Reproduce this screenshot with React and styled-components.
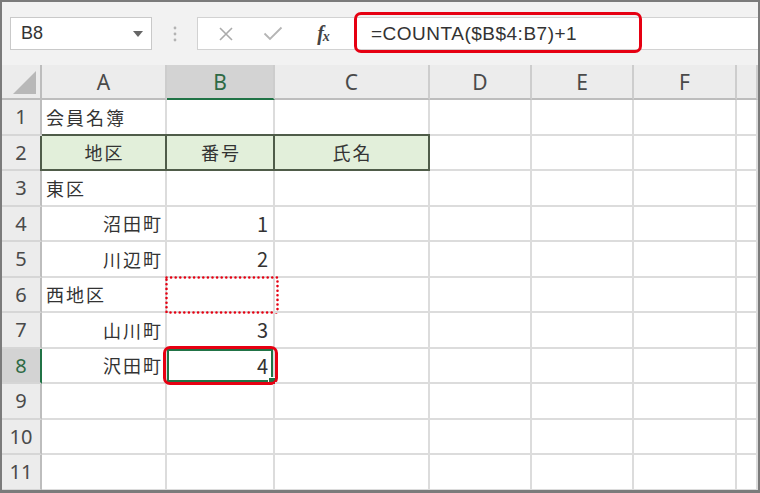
import React from 'react';
import styled, { createGlobalStyle, css } from 'styled-components';

const GlobalStyle = createGlobalStyle`
  html, body {
    margin: 0;
    padding: 0;
    background: #ffffff;
  }
  body {
    font-family: "Noto Sans CJK JP", "Noto Sans", sans-serif;
  }
`;

const green = '#217346';
const red = '#e60012';

const Frame = styled.div`
  width: 760px;
  height: 493px;
  box-sizing: border-box;
  border: 2px solid #7b7b7b;
  border-bottom-width: 3px;
  background: #f2f2f2;
  overflow: hidden;
  display: flex;
  flex-direction: column;
`;

const Toolbar = styled.div`
  height: 63px;
  flex: none;
  box-sizing: border-box;
  padding: 15px 0 0 8px;
  display: flex;
  align-items: flex-start;
`;

const NameBox = styled.div`
  width: 142px;
  height: 33px;
  box-sizing: border-box;
  border: 1px solid #c9c9c9;
  background: #fff;
  display: flex;
  align-items: center;
  justify-content: space-between;
  padding: 0 8px 0 10px;
  font-family: "Liberation Sans", Arial, sans-serif;
  font-size: 18px;
  color: #333;
`;

const Separator = styled.div`
  width: 45px;
  height: 33px;
  display: flex;
  align-items: center;
  justify-content: center;
`;

const FormulaBar = styled.div`
  flex: 1;
  height: 33px;
  box-sizing: border-box;
  border: 1px solid #d2d2d2;
  border-right: none;
  background: #fff;
  display: flex;
  align-items: stretch;
`;

const IconSlot = styled.div`
  width: ${(p) => p.$w}px;
  display: flex;
  align-items: center;
  justify-content: center;
  flex: none;
`;

const Fx = styled.span`
  font-family: "Liberation Serif", "Times New Roman", serif;
  font-style: italic;
  font-weight: bold;
  font-size: 20px;
  color: #444;
  letter-spacing: -1px;

  sub {
    font-size: 14px;
    vertical-align: -1px;
  }
`;

const FormulaInput = styled.div`
  flex: 1;
  position: relative;
  display: flex;
  align-items: center;
  padding-left: 17px;
  font-family: "Liberation Sans", Arial, sans-serif;
  font-size: 19px;
  letter-spacing: 0.5px;
  color: #333;
`;

const Callout = styled.div`
  position: absolute;
  box-sizing: border-box;
  border: 3px solid ${red};
  border-radius: 7px;
  pointer-events: none;
`;

const FormulaCallout = styled(Callout)`
  left: 0;
  top: -6px;
  width: 288px;
  height: 41px;
`;

const Sheet = styled.div`
  flex: 1;
  display: grid;
  grid-template-columns: 40px 125px 108px 155px 102px 102px 103px 1fr;
  grid-template-rows: 35px repeat(11, 35.5px);
  background: #fff;
`;

const HeaderCell = styled.div`
  box-sizing: border-box;
  background: ${(p) => (p.$active ? '#d3d3d3' : '#ececec')};
  color: ${(p) => (p.$active ? '#2e6a45' : '#4a4a4a')};
  font-family: "Noto Sans", "Liberation Sans", sans-serif;
  font-size: 21px;
  display: flex;
  align-items: center;
  justify-content: center;
`;

const ColHeader = styled(HeaderCell)`
  border-right: 2px solid #cdcdcd;
  border-bottom: 2px solid ${(p) => (p.$active ? green : '#bdbdbd')};
`;

const RowHeader = styled(HeaderCell)`
  font-size: 20px;
  border-right: 2px solid ${(p) => (p.$active ? green : '#bdbdbd')};
  border-bottom: 2px solid #d6d6d6;
`;

const Corner = styled.div`
  box-sizing: border-box;
  background: #ececec;
  border-right: 2px solid #bdbdbd;
  border-bottom: 2px solid #bdbdbd;
  display: flex;
  align-items: flex-end;
  justify-content: flex-end;
  padding: 0 4px 4px 0;
`;

const Cell = styled.div`
  position: relative;
  box-sizing: border-box;
  border-right: 2px solid #dcdcdc;
  border-bottom: 2px solid #dcdcdc;
  display: flex;
  align-items: center;
  justify-content: ${(p) => (p.$align === 'right' ? 'flex-end' : p.$align === 'center' ? 'center' : 'flex-start')};
  padding: 0 ${(p) => (p.$num ? 5 : 2)}px 0 4px;
  font-size: ${(p) => (p.$num ? 20 : 18)}px;
  letter-spacing: ${(p) => (p.$num ? 0 : 2)}px;
  color: #333;
  white-space: nowrap;

  ${(p) =>
    p.$boxed &&
    css`
      background: #e2efda;
      border-right-color: #4f5c49;
      border-bottom-color: #4f5c49;
      box-shadow: 0 -2px 0 #4f5c49 ${p.$first ? ', -2px 0 0 #4f5c49' : ''};
    `}

  ${(p) =>
    p.$selected &&
    css`
      box-shadow: inset 0 0 0 2px ${green};
    `}
`;

const Marquee = styled.svg`
  position: absolute;
  top: -2px;
  left: -2px;
  pointer-events: none;
  overflow: visible;
`;

const CellCallout = styled(Callout)`
  top: -3px;
  left: -4px;
  right: -5px;
  bottom: -3px;
`;

const FillHandle = styled.div`
  position: absolute;
  right: -2px;
  bottom: -2px;
  width: 6px;
  height: 6px;
  background: ${green};
  border-left: 1px solid #fff;
  border-top: 1px solid #fff;
`;

const columns = ['A', 'B', 'C', 'D', 'E', 'F', 'G'];

const rows = [
  [{ text: '会員名簿' }],
  [
    { text: '地区', align: 'center', boxed: true },
    { text: '番号', align: 'center', boxed: true },
    { text: '氏名', align: 'center', boxed: true },
  ],
  [{ text: '東区' }],
  [{ text: '沼田町', align: 'right' }, { text: '1', align: 'right', num: true }],
  [{ text: '川辺町', align: 'right' }, { text: '2', align: 'right', num: true }],
  [{ text: '西地区' }, { marquee: true }],
  [{ text: '山川町', align: 'right' }, { text: '3', align: 'right', num: true }],
  [{ text: '沢田町', align: 'right' }, { text: '4', align: 'right', num: true, selected: true }],
  [],
  [],
  [],
];

const DropArrow = () => (
  <svg width="10" height="6" viewBox="0 0 10 6">
    <path d="M0 0h10L5 6z" fill="#666" />
  </svg>
);

const Dots = () => (
  <svg width="4" height="16" viewBox="0 0 4 16">
    <circle cx="2" cy="2" r="1.4" fill="#b3b3b3" />
    <circle cx="2" cy="8" r="1.4" fill="#b3b3b3" />
    <circle cx="2" cy="14" r="1.4" fill="#b3b3b3" />
  </svg>
);

const CancelIcon = () => (
  <svg width="16" height="14" viewBox="0 0 16 14">
    <path d="M2 1l12 12M14 1L2 13" stroke="#ababab" strokeWidth="1.6" fill="none" />
  </svg>
);

const EnterIcon = () => (
  <svg width="20" height="15" viewBox="0 0 20 15">
    <path d="M1.5 7.5l5.5 5.5L18.5 1.5" stroke="#b5b5b5" strokeWidth="1.8" fill="none" />
  </svg>
);

const CornerTriangle = () => (
  <svg width="23" height="23" viewBox="0 0 23 23">
    <path d="M23 0v23H0z" fill="#b8b8b8" />
  </svg>
);

const MarqueeBox = () => (
  <Marquee width="114" height="38" viewBox="0 0 114 38">
    <rect
      x="1.5"
      y="1.5"
      width="111"
      height="35"
      fill="none"
      stroke={red}
      strokeWidth="2.6"
      strokeLinecap="round"
      strokeDasharray="0 4.6"
    />
  </Marquee>
);

const App = () => {
  return (
    <React.Fragment>
      <GlobalStyle />
      <Frame>
        <Toolbar>
          <NameBox>
            <span>B8</span>
            <DropArrow />
          </NameBox>
          <Separator>
            <Dots />
          </Separator>
          <FormulaBar>
            <IconSlot $w={56}>
              <CancelIcon />
            </IconSlot>
            <IconSlot $w={38}>
              <EnterIcon />
            </IconSlot>
            <IconSlot $w={62}>
              <Fx>
                f<sub>x</sub>
              </Fx>
            </IconSlot>
            <FormulaInput>
              =COUNTA($B$4:B7)+1
              <FormulaCallout />
            </FormulaInput>
          </FormulaBar>
        </Toolbar>

        <Sheet>
          <Corner>
            <CornerTriangle />
          </Corner>
          {columns.map((c) => (
            <ColHeader key={c} $active={c === 'B'}>
              {c === 'G' ? '' : c}
            </ColHeader>
          ))}
          {rows.map((row, r) => (
            <React.Fragment key={r}>
              <RowHeader $active={r === 7}>{r + 1}</RowHeader>
              {columns.map((c, i) => {
                const cell = row[i] || {};
                return (
                  <Cell
                    key={c}
                    $align={cell.align}
                    $num={cell.num}
                    $boxed={cell.boxed}
                    $first={i === 0}
                    $selected={cell.selected}
                  >
                    {cell.text}
                    {cell.marquee && <MarqueeBox />}
                    {cell.selected && (
                      <>
                        <FillHandle />
                        <CellCallout />
                      </>
                    )}
                  </Cell>
                );
              })}
            </React.Fragment>
          ))}
        </Sheet>
      </Frame>
    </React.Fragment>
  );
};

export default App;
